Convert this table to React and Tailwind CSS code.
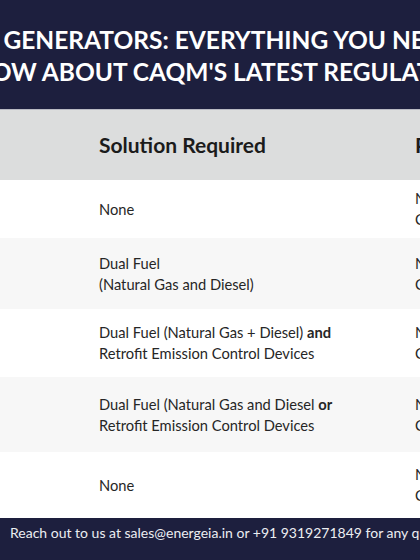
import React from 'react';

const rows = [
  { h: 'h-[58px]', bg: 'bg-white', lines: [['None']], right: ['No restrictions', 'Can operate'] },
  { h: 'h-[71px]', bg: 'bg-[#f7f7f7]', lines: [['Dual Fuel'], ['(Natural Gas and Diesel)']], right: ['No restrictions', 'Can operate'] },
  {
    h: 'h-[68px]',
    bg: 'bg-white',
    lines: [['Dual Fuel (Natural Gas + Diesel) ', 'and'], ['Retrofit Emission Control Devices']],
    right: ['No restrictions', 'Can operate'],
  },
  {
    h: 'h-[75px]',
    bg: 'bg-[#f7f7f7]',
    lines: [['Dual Fuel (Natural Gas and Diesel ', 'or'], ['Retrofit Emission Control Devices']],
    right: ['No restrictions', 'Can operate'],
  },
  { h: 'h-[66px]', bg: 'bg-white', lines: [['None']], right: ['No restrictions', 'Can operate'] },
];

const App = () => {
  return (
    <div className="w-[420px] h-[560px] overflow-hidden flex flex-col font-['Lato','Liberation_Sans',sans-serif]">
      {/* Title banner */}
      <div className="h-[109px] shrink-0 bg-[#1d1f3e] pt-[24px] text-white font-bold text-[24.5px] leading-[32px] overflow-hidden">
        <div className="whitespace-nowrap ml-[-82px]">DIESEL GENERATORS: EVERYTHING YOU NEED TO</div>
        <div className="whitespace-nowrap ml-[-44px]">KNOW ABOUT CAQM'S LATEST REGULATIONS</div>
      </div>
      <div className="h-px shrink-0 bg-[#b9bac3]" />

      {/* Table header */}
      <div className="h-[70px] shrink-0 bg-[#dcdddd] flex items-center text-[21px] font-bold text-[#1b1b1b]">
        <div className="w-[99px] shrink-0" />
        <div className="w-[316px] shrink-0 whitespace-nowrap">Solution Required</div>
        <div className="whitespace-nowrap">Permitted Operation</div>
      </div>

      {/* Table rows */}
      {rows.map((row, i) => (
        <div key={i} className={`${row.h} ${row.bg} shrink-0 flex items-center text-[14.7px] leading-[21px] text-[#262626]`}>
          <div className="w-[99px] shrink-0" />
          <div className="w-[316px] shrink-0">
            {row.lines.map((line, j) => (
              <div key={j} className="whitespace-nowrap">
                {line[0]}
                {line[1] && <span className="font-bold">{line[1]}</span>}
              </div>
            ))}
          </div>
          <div className="whitespace-nowrap">
            <div>{row.right[0]}</div>
            <div>{row.right[1]}</div>
          </div>
        </div>
      ))}

      {/* Footer */}
      <div className="flex-1 bg-[#1d1f3e] pl-[10px] pt-[5px] text-[14px] leading-[20px] text-[#eceef2] whitespace-nowrap">
        Reach out to us at sales@energeia.in or +91 9319271849 for any queries.
      </div>
    </div>
  );
};

export default App;
